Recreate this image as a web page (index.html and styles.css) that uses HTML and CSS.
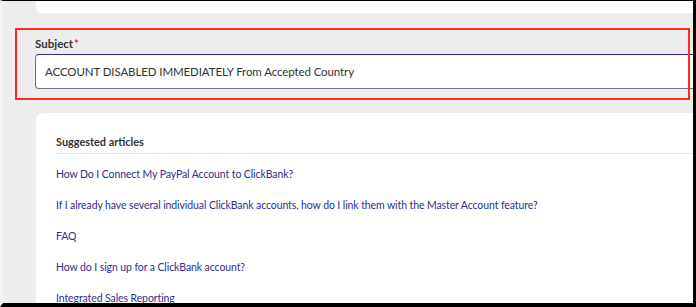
FILE: index.html
```html
<!DOCTYPE html>
<html lang="en">
<head>
<meta charset="utf-8">
<title>Subject</title>
<link rel="stylesheet" href="styles.css">
</head>
<body>
<div class="frame">
  <div class="top-card"></div>
  <div class="subject">
    <label class="label" for="subj">Subject<span class="req">*</span></label>
    <div class="input" id="subj">ACCOUNT DISABLED IMMEDIATELY From Accepted Country</div>
    <div class="highlight"></div>
  </div>
  <div class="card">
    <h2 class="card-title">Suggested articles</h2>
    <ul class="links">
      <li><a href="#">How Do I Connect My PayPal Account to ClickBank?</a></li>
      <li><a href="#">If I already have several individual ClickBank accounts, how do I link them with the Master Account feature?</a></li>
      <li><a href="#">FAQ</a></li>
      <li><a href="#">How do I sign up for a ClickBank account?</a></li>
      <li><a href="#">Integrated Sales Reporting</a></li>
    </ul>
  </div>
</div>
</body>
</html>
```

FILE: styles.css
```css
* { box-sizing: border-box; }
html, body { margin: 0; padding: 0; }
body {
  font-family: Lato, "Open Sans", sans-serif;
  background: #000;
}
.frame {
  width: 696px;
  height: 307px;
  overflow: hidden;
  background: #ededed;
  border-top: 1px solid #000;
  border-right: 3px solid #000;
  border-bottom: 4px solid #000;
  border-left: 3px solid #f4f4f4;
  display: flex;
  flex-direction: column;
}
.top-card {
  flex: none;
  height: 13px;
  margin-left: 33px;
  background: #fff;
  border-bottom-left-radius: 6px;
  border-bottom: 1px dotted #e4e4e4;
}
.subject {
  flex: none;
  position: relative;
  padding: 22px 0 0 32px;
  height: 99px;
}
.label {
  display: block;
  font-size: 11.5px;
  font-weight: 700;
  line-height: 16px;
  color: #333;
}
.req { color: #e0312b; margin-left: 1px; }
.input {
  margin-top: 2px;
  height: 35px;
  margin-right: -10px;
  border: 1px solid #6f68ad;
  border-top-color: #2f2a8c;
  border-radius: 4px;
  background: #fff;
  padding: 0 0 0 9px;
  font-size: 11.5px;
  letter-spacing: -0.1px;
  line-height: 33px;
  color: #333;
  white-space: nowrap;
}
.highlight {
  position: absolute;
  left: 12px;
  top: 14px;
  width: 675px;
  height: 72px;
  border: 2.5px solid #ff2b1f;
  pointer-events: none;
}
.card {
  flex: 1;
  margin-left: 33px;
  background: #fff;
  border-top-left-radius: 6px;
  padding: 21px 0 0 20px;
}
.card-title {
  margin: 0;
  font-size: 10.9px;
  font-weight: 700;
  line-height: 16px;
  color: #333;
  padding-bottom: 3px;
  border-bottom: 1px solid #e6e6e6;
}
.links {
  list-style: none;
  margin: 0;
  padding: 12px 0 0;
}
.links li {
  height: 31px;
  font-size: 10.5px;
  letter-spacing: -0.1px;
  line-height: 16px;
}
.links a {
  color: #2f2f8c;
  text-decoration: none;
}
```
